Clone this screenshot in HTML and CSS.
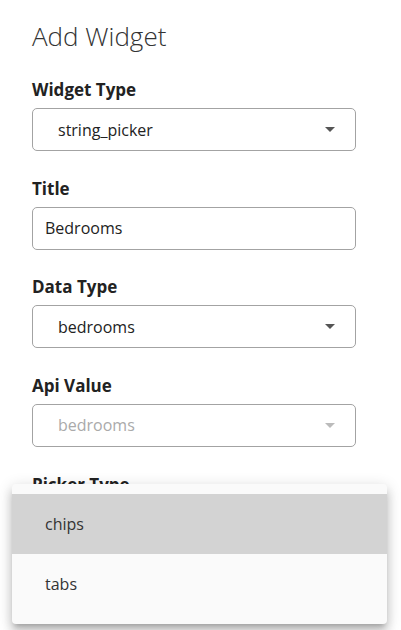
FILE: index.html
```html
<!DOCTYPE html>
<html>
<head>
<meta charset="utf-8">
<link rel="stylesheet" href="styles.css">
</head>
<body>
<div class="page">
  <h1 class="heading">Add Widget</h1>
  <div class="field">
    <div class="label">Widget Type</div>
    <div class="select"><span class="value">string_picker</span><span class="arrow"></span></div>
  </div>
  <div class="field">
    <div class="label">Title</div>
    <div class="input"><span class="value">Bedrooms</span></div>
  </div>
  <div class="field">
    <div class="label">Data Type</div>
    <div class="select"><span class="value">bedrooms</span><span class="arrow"></span></div>
  </div>
  <div class="field">
    <div class="label">Api Value</div>
    <div class="select disabled"><span class="value">bedrooms</span><span class="arrow"></span></div>
  </div>
  <div class="field">
    <div class="label">Picker Type</div>
    <div class="select"><span class="value"></span><span class="arrow"></span></div>
  </div>
</div>
<ul class="menu">
  <li class="item selected">chips</li>
  <li class="item">tabs</li>
</ul>
</body>
</html>
```
FILE: styles.css
```css
html, body {
  margin: 0;
  padding: 0;
  background: #fff;
  overflow: hidden;
  height: 630px;
}
body {
  font-family: "Open Sans", "Noto Sans", sans-serif;
  color: #212121;
  position: relative;
}
.page {
  padding: 18px 0 0 32px;
  width: 324px;
  display: flex;
  flex-direction: column;
}
.heading {
  margin: 0 0 24px 0;
  font-size: 26px;
  font-weight: 300;
  line-height: 36px;
  color: #333;
}
.field {
  display: flex;
  flex-direction: column;
  gap: 6px;
  margin-bottom: 25.67px;
}
.label {
  font-size: 17px;
  font-weight: 700;
  line-height: 24px;
  color: #222;
}
.select, .input {
  box-sizing: border-box;
  height: 43px;
  border: 1px solid #a3a3a3;
  border-radius: 5px;
  display: flex;
  align-items: center;
  font-size: 16px;
  color: #222;
}
.select {
  padding: 0 20px 0 25px;
}
.input {
  padding: 0 12px;
}
.value {
  flex: 1;
}
.arrow {
  width: 0;
  height: 0;
  border-left: 5px solid transparent;
  border-right: 5px solid transparent;
  border-top: 5px solid #555;
}
.disabled .value { color: #aaa; }
.disabled .arrow { border-top-color: #bbb; }
.menu {
  position: absolute;
  left: 12px;
  top: 484px;
  width: 375px;
  margin: 0;
  padding: 10px 0;
  list-style: none;
  background: #fafafa;
  border-radius: 4px;
  box-shadow: 0 5px 5px -3px rgba(0,0,0,.2), 0 8px 10px 1px rgba(0,0,0,.14), 0 3px 14px 2px rgba(0,0,0,.12);
}
.item {
  height: 60px;
  display: flex;
  align-items: center;
  padding-left: 33px;
  font-size: 16px;
  color: #333;
}
.item.selected {
  background: #d3d3d3;
}
```
